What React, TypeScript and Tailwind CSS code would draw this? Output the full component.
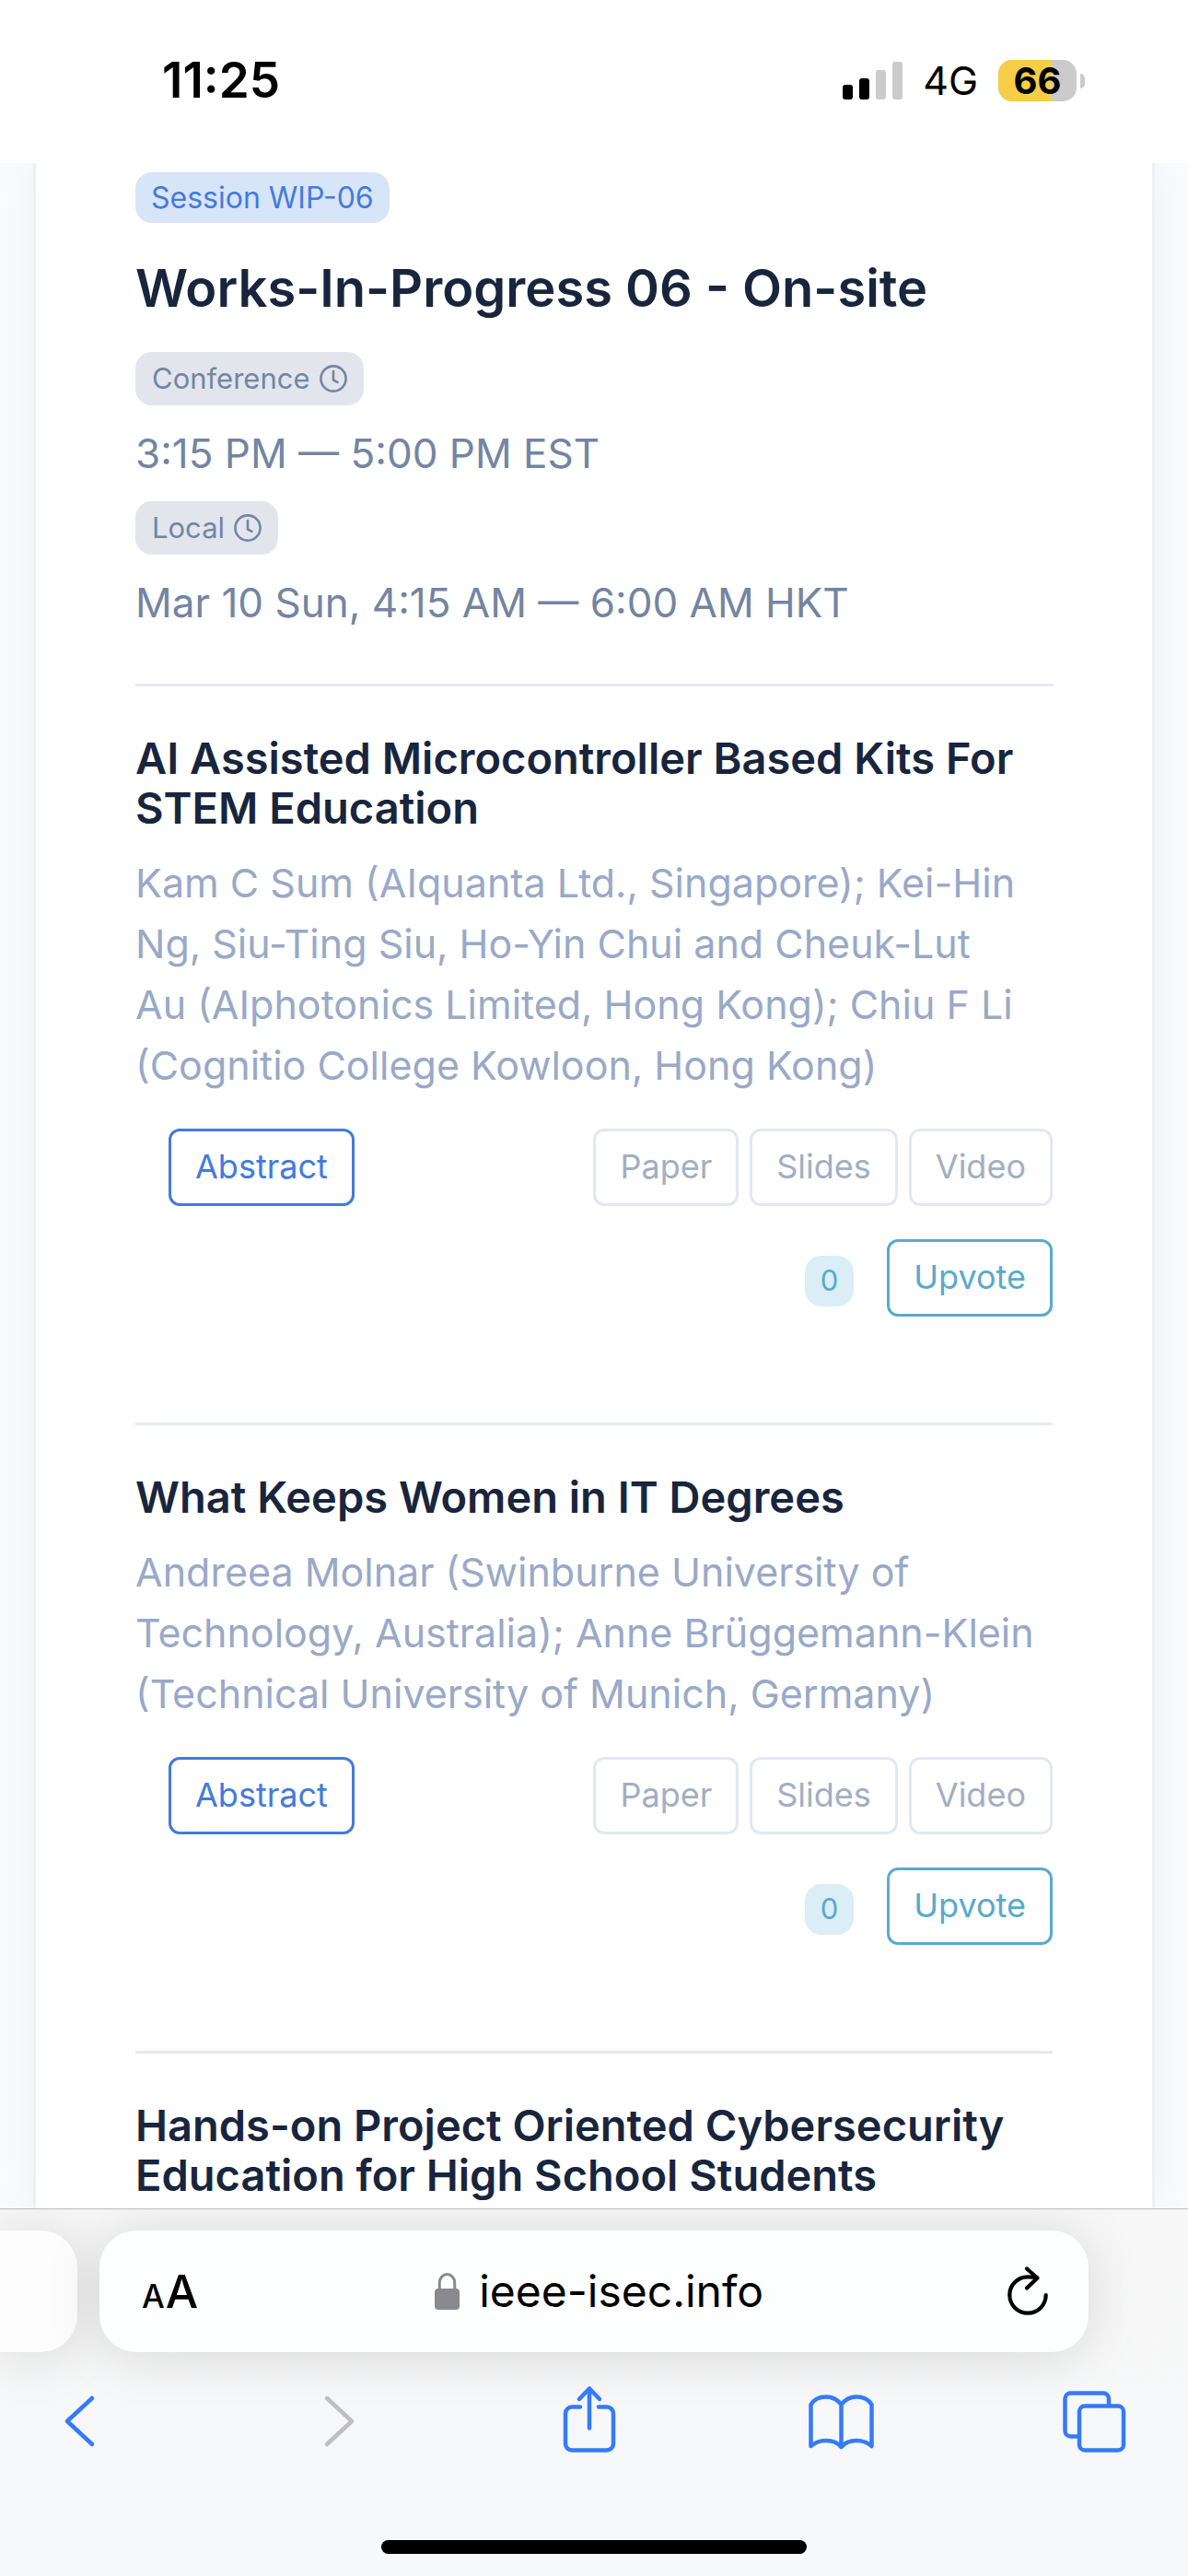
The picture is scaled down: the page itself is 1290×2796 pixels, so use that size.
import type { ReactNode } from 'react';

type Talk = { title: string; authors?: string };

const talks: Talk[] = [
  {
    title: 'AI Assisted Microcontroller Based Kits For STEM Education',
    authors:
      'Kam C Sum (AIquanta Ltd., Singapore); Kei-Hin Ng, Siu-Ting Siu, Ho-Yin Chui and Cheuk-Lut Au\u00a0(AIphotonics Limited, Hong Kong); Chiu F Li (Cognitio College Kowloon, Hong Kong)',
  },
  {
    title: 'What Keeps Women in IT Degrees',
    authors:
      'Andreea Molnar (Swinburne University of Technology, Australia); Anne Brüggemann-Klein (Technical University of Munich, Germany)',
  },
  { title: 'Hands-on Project Oriented Cybersecurity Education for High School Students' },
];

function StatusBar() {
  return (
    <header className="flex h-[177px] shrink-0 items-center justify-between bg-white pr-[112px] pb-[2px] pl-[176px] text-black">
      <span className="text-[53px] font-semibold">11:25</span>
      <div className="flex items-center">
        <svg width="65" height="42" viewBox="0 0 65 42" aria-label="Signal strength">
          <rect x="0" y="25" width="11" height="16" rx="3" />
          <rect x="18" y="18" width="11" height="23" rx="3" />
          <rect x="36" y="9" width="11" height="32" rx="3" fill="#cbcbcb" />
          <rect x="54" y="0" width="11" height="41" rx="3" fill="#cbcbcb" />
        </svg>
        <span className="ml-[22px] text-[43px]">4G</span>
        <div className="relative ml-[22px] flex h-[45px] w-[85px] items-center justify-center rounded-[15px] bg-[#cbcbcb]">
          <div className="absolute inset-y-0 left-0 w-2/3 rounded-l-[15px] bg-[#f5cd46]" />
          <span className="relative text-[40px] leading-[45px] font-bold">66</span>
        </div>
        <div className="ml-1 h-4 w-[5px] rounded-r-full bg-[#cbcbcb]" />
      </div>
    </header>
  );
}

function ClockIcon() {
  return (
    <svg width="30" height="30" viewBox="0 0 30 30" fill="none" stroke="currentColor" strokeWidth="2.6" strokeLinecap="round" strokeLinejoin="round" aria-hidden="true">
      <circle cx="15" cy="15" r="13.6" />
      <path d="M15 7v9.5l4.5 2.3" />
    </svg>
  );
}

function TimeSlot({ label, children }: { label: string; children: ReactNode }) {
  return (
    <div className="flex flex-col items-start gap-[19px]">
      <span className="flex h-[58px] items-center gap-[10px] rounded-[18px] bg-[#e2e5ec] px-[18px] text-[31px] text-[#7385a3]">
        {label}
        <ClockIcon />
      </span>
      <p className="text-[44px] leading-[66px] text-[#7385a3]">{children}</p>
    </div>
  );
}

function FileButton({ children }: { children: ReactNode }) {
  return (
    <button type="button" className="h-[84px] rounded-xl border-3 border-[#e2e8f3] px-[26px] pb-[3px] text-[36px] text-[#a2aec3]">
      {children}
    </button>
  );
}

function TalkItem({ talk }: { talk: Talk }) {
  return (
    <article className="border-t-3 border-[#e4eaf4] pt-[51px]">
      <h2 className="text-[47px] leading-[54px] font-semibold text-[#18253d]">{talk.title}</h2>
      {talk.authors && (
        <>
          <p className="mt-[21px] text-[43px] leading-[66px] text-[#99a9c8]">{talk.authors}</p>
          <div className="mt-9 flex justify-between pl-9">
            <button type="button" className="h-[84px] rounded-xl border-3 border-[#437bdc] px-[26px] pb-[3px] text-[36px] text-[#437bdc]">
              Abstract
            </button>
            <div className="flex gap-3">
              <FileButton>Paper</FileButton>
              <FileButton>Slides</FileButton>
              <FileButton>Video</FileButton>
            </div>
          </div>
          <div className="mt-9 mb-[115px] flex items-end justify-end gap-9">
            <span className="mb-[11px] flex h-[55px] items-center rounded-[18px] bg-[#dbedf5] px-[17px] text-[31px] text-[#58aacd]">0</span>
            <button type="button" className="h-[84px] rounded-xl border-3 border-[#5aaace] px-[26px] pb-[3px] text-[36px] text-[#58aacd]">
              Upvote
            </button>
          </div>
        </>
      )}
    </article>
  );
}

function ToolButton({ label, muted, children }: { label: string; muted?: boolean; children: ReactNode }) {
  return (
    <button type="button" aria-label={label} className={`flex size-[100px] items-center justify-center ${muted ? 'text-[#bfbfbf]' : 'text-[#347bf8]'}`}>
      <svg width="80" height="80" viewBox="0 0 80 80" fill="none" stroke="currentColor" strokeWidth="4.5" strokeLinecap="round" strokeLinejoin="round">
        {children}
      </svg>
    </button>
  );
}

function BrowserBar() {
  return (
    <footer className="flex shrink-0 flex-col overflow-hidden border-t border-[#bcbcbd] bg-linear-to-b from-[#f7f7f7] to-[#f7f8fa] pt-[23px] pb-6">
      <div className="flex h-[132px] gap-6 pr-[108px]">
        <div className="w-[84px] rounded-r-[40px] bg-[#fdfdfd] shadow-[0_4px_60px_rgba(0,0,0,0.13)]" />
        <div className="flex flex-1 items-center rounded-[40px] bg-[#fdfefe] pr-11 pl-[46px] text-black shadow-[0_4px_60px_rgba(0,0,0,0.13)]">
          <button type="button" aria-label="Page settings" className="flex items-baseline gap-px font-medium">
            <span className="text-[35px]">A</span>
            <span className="text-[50px]">A</span>
          </button>
          <button type="button" className="flex flex-1 items-center justify-center gap-[20px] pr-2 text-[48px]">
            <svg width="28" height="40" viewBox="0 0 28 40" aria-hidden="true">
              <rect x="0" y="17" width="27" height="23" rx="4" fill="#8a898e" />
              <path d="M5.3 18V10.5a8.2 9 0 0 1 16.4 0V18" fill="none" stroke="#8a898e" strokeWidth="3" />
            </svg>
            ieee-isec.info
          </button>
          <button type="button" aria-label="Reload">
            <svg width="44" height="54" viewBox="0 0 44 54" fill="none" stroke="currentColor" strokeWidth="4.2" strokeLinecap="round" strokeLinejoin="round">
              <path d="M41.7 31A19.7 19.7 0 1 1 22 11.3c3.5 0 6.5.2 9.5 1M21 2.5l11.5 10L21 23.5" />
            </svg>
          </button>
        </div>
      </div>
      <nav className="mt-[25px] flex justify-between pr-[52px] pl-[37px]">
        <ToolButton label="Back">
          <path d="M53 15L26 40l27 25" />
        </ToolButton>
        <ToolButton label="Forward" muted>
          <path d="M33 15l27 25-27 25" />
        </ToolButton>
        <ToolButton label="Share">
          <path d="M32 24.5H23a7 7 0 0 0-7 7V64.5a7 7 0 0 0 7 7H61a7 7 0 0 0 7-7V31.5a7 7 0 0 0-7-7H52M42 47.5V5M31 16L42 4.5 53 16" />
        </ToolButton>
        <ToolButton label="Bookmarks">
          <path d="M40.5 22C36 16 30 13.5 24 13.5S11 16 7.5 22V67C12 63 18 61 24 61s12.5 2 16.5 7C44.5 63 51 61 57 61s12 2 16.5 6V22C70 16 63 13.5 57 13.5S45 16 40.5 22V68" />
        </ToolButton>
        <ToolButton label="Tabs">
          <rect x="24" y="23.5" width="48" height="48" rx="6" />
          <path d="M24 56.5H14.5a6 6 0 0 1-6-6V15.5a6 6 0 0 1 6-6H50a6 6 0 0 1 6 6V23" />
        </ToolButton>
      </nav>
      <div className="mt-[79px] h-[15px] w-[462px] self-center rounded-full bg-black" />
    </footer>
  );
}

export default function App() {
  return (
    <div className="flex h-screen flex-col font-['Inter',sans-serif]">
      <StatusBar />
      <main className="min-h-0 flex-1 overflow-hidden bg-[#f9fbfd] px-9">
        <section className="min-h-full border-x-3 border-[#ecf1f8] bg-white px-[108px] pt-[10px] shadow-[0_0_48px_rgba(18,38,63,0.05)]">
          <span className="flex h-[55px] w-fit items-center rounded-[18px] bg-[#d8e4f8] px-[17px] text-[32px] text-[#437bdc]">
            Session WIP-06
          </span>
          <h1 className="mt-[37px] text-[56px] leading-[68px] font-semibold text-[#18253d]">Works-In-Progress 06 - On-site</h1>
          <div className="mt-[35px] mb-[55px] flex flex-col gap-[19px]">
            <TimeSlot label="Conference">3:15 PM — 5:00 PM EST</TimeSlot>
            <TimeSlot label="Local">Mar 10 Sun, 4:15 AM — 6:00 AM HKT</TimeSlot>
          </div>
          {talks.map((talk) => (
            <TalkItem key={talk.title} talk={talk} />
          ))}
        </section>
      </main>
      <BrowserBar />
    </div>
  );
}
